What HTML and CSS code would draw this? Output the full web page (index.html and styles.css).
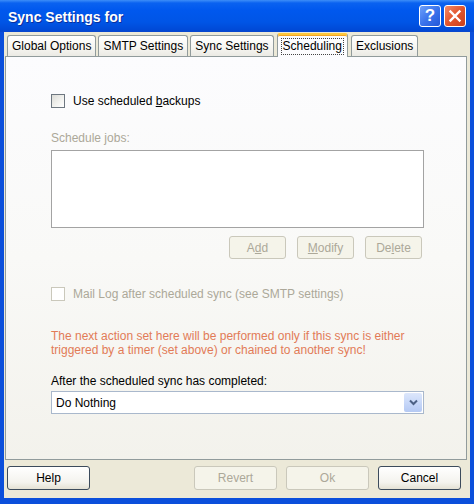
FILE: index.html
```html
<!DOCTYPE html>
<html>
<head>
<meta charset="utf-8">
<link rel="stylesheet" href="styles.css">
</head>
<body>
<div class="window">
  <div class="titlebar">
    <span class="title">Sync Settings for</span>
    <div class="tb-btns">
      <span class="tb tb-help">?</span>
      <span class="tb tb-close"><svg width="14" height="14" viewBox="0 0 14 14"><path d="M2.5 2.5 L11.5 11.5 M11.5 2.5 L2.5 11.5" stroke="#fff" stroke-width="2.4" stroke-linecap="square"/></svg></span>
    </div>
  </div>
  <div class="frame">
    <div class="client">
      <div class="tabs">
        <div class="tab">Global Options</div>
        <div class="tab">SMTP Settings</div>
        <div class="tab">Sync Settings</div>
        <div class="tab tab-active"><span class="focus">Scheduling</span></div>
        <div class="tab">Exclusions</div>
      </div>
      <div class="panel">
        <label class="check-row">
          <span class="checkbox"></span>
          <span>Use scheduled <u>b</u>ackups</span>
        </label>
        <div class="label-disabled">Schedule jobs:</div>
        <div class="listbox"></div>
        <div class="list-actions">
          <span class="btn btn-disabled">A<u>d</u>d</span>
          <span class="btn btn-disabled"><u>M</u>odify</span>
          <span class="btn btn-disabled">De<u>l</u>ete</span>
        </div>
        <label class="check-row check-disabled">
          <span class="checkbox"></span>
          <span>Mail Log after scheduled sync (see SMTP settings)</span>
        </label>
        <p class="note">The next action set here will be performed only if this sync is either triggered by a timer (set above) or chained to another sync!</p>
        <div class="label">After the scheduled sync has completed:</div>
        <div class="combo">
          <span class="combo-text">Do Nothing</span>
          <span class="combo-btn"><svg width="9" height="7" viewBox="0 0 9 7"><path d="M1 1.5 L4.5 5 L8 1.5" stroke="#4d6185" stroke-width="2" fill="none"/></svg></span>
        </div>
      </div>
      <div class="footer">
        <span class="btn btn-wide">Help</span>
        <div class="footer-right">
          <span class="btn btn-wide btn-disabled">Revert</span>
          <span class="btn btn-wide btn-disabled">Ok</span>
          <span class="btn btn-wide">Cancel</span>
        </div>
      </div>
    </div>
  </div>
</div>
</body>
</html>
```

FILE: styles.css
```css
* { box-sizing: border-box; }
html, body { margin: 0; padding: 0; }
body {
  width: 474px;
  height: 504px;
  overflow: hidden;
  font-family: "Liberation Sans", Arial, sans-serif;
  font-size: 12px;
  color: #000;
  background: #0b4ed8;
}
.window {
  width: 474px;
  height: 504px;
  display: flex;
  flex-direction: column;
}
.titlebar {
  height: 32px;
  flex: none;
  display: flex;
  align-items: center;
  justify-content: space-between;
  padding: 0 8px 0 8px;
  background: linear-gradient(to bottom, #3d8ef8 0px, #0a62f0 3px, #0058ee 10px, #0055e6 22px, #0049d6 30px, #0b46cc 32px);
}
.title {
  color: #fff;
  font-weight: bold;
  font-size: 14px;
  text-shadow: 1px 1px 0 #0a2f9c;
  padding-top: 2px;
}
.tb-btns {
  display: flex;
  gap: 3px;
}
.tb {
  width: 22px;
  height: 22px;
  border: 1px solid #fff;
  border-radius: 3px;
  display: flex;
  align-items: center;
  justify-content: center;
  color: #fff;
  font-weight: bold;
  font-size: 17px;
}
.tb-help {
  background: linear-gradient(135deg, #6c9ffa 0%, #3b74ec 50%, #2357d8 100%);
}
.tb-close {
  background: linear-gradient(135deg, #f08a6a 0%, #e2552d 50%, #c8401e 100%);
}
.frame {
  flex: 1;
  display: flex;
  padding: 0 4px 6px 4px;
  background: #0b4fdb;
}
.client {
  flex: 1;
  display: flex;
  flex-direction: column;
  background: #ece9d8;
  padding: 1px 3px 0 1px;
}
.tabs {
  display: flex;
  align-items: flex-end;
  gap: 2px;
  height: 24px;
  padding-left: 2px;
  margin-bottom: -1px;
  position: relative;
  z-index: 1;
}
.tab {
  height: 21px;
  margin-bottom: 1px;
  padding: 0 4px;
  display: flex;
  align-items: center;
  border: 1px solid #919b9c;
  border-bottom: none;
  border-radius: 3px 3px 0 0;
  background: linear-gradient(to bottom, #ffffff 0%, #f6f5f0 60%, #ebeae4 100%);
  white-space: nowrap;
}
.tab-active {
  height: 24px;
  margin-bottom: 0;
  margin-left: 1px;
  margin-right: 1px;
  padding: 0 3px;
  background: #fcfcfe;
  border-top: 2px solid #ffc83c;
  box-shadow: inset 0 1px 0 #f5a623;
}
.focus {
  border: 1px dotted #444;
  padding: 0 1px;
  line-height: 15px;
}
.panel {
  height: 404px;
  flex: none;
  border: 1px solid #919b9c;
  background: linear-gradient(to bottom, #fcfcfe 0%, #f9f9f7 50%, #f3f2ec 100%);
  padding: 36px 0 0 45px;
  display: flex;
  flex-direction: column;
  align-items: flex-start;
}
.check-row {
  display: flex;
  align-items: center;
  gap: 8px;
  height: 16px;
}
.checkbox {
  width: 14px;
  height: 14px;
  border: 1px solid #6e7780;
  background: linear-gradient(135deg, #dcdcd7 0%, #f3f3f0 60%, #ffffff 100%);
}
.check-disabled { color: #aca899; margin-top: 27px; }
.check-disabled .checkbox {
  border-color: #cac8bb;
  background: #fff;
}
.label-disabled {
  color: #aca899;
  margin-top: 22px;
  line-height: 14px;
}
.listbox {
  width: 373px;
  height: 78px;
  margin-top: 5px;
  border: 1px solid #a3a3a3;
  background: #fff;
}
.list-actions {
  width: 373px;
  display: flex;
  justify-content: flex-end;
  gap: 11px;
  margin-top: 8px;
  padding-right: 2px;
}
.btn {
  width: 57px;
  height: 23px;
  display: flex;
  align-items: center;
  justify-content: center;
  border: 1px solid #3c4b5c;
  border-radius: 3px;
  background: linear-gradient(to bottom, #ffffff 0%, #f4f3ee 70%, #e4e1d4 100%);
}
.btn-disabled {
  color: #aca899;
  border-color: #cac8bb;
  background: #f5f4ea;
}
.note {
  margin: 27px 0 0 0;
  width: 373px;
  color: #e27b57;
  line-height: 14px;
}
.label {
  margin-top: 17px;
  line-height: 14px;
}
.combo {
  width: 373px;
  height: 23px;
  margin-top: 3px;
  border: 1px solid #a9b8cc;
  background: #fff;
  display: flex;
  align-items: center;
  justify-content: space-between;
  padding: 1px 1px 1px 4px;
}
.combo-btn {
  width: 18px;
  height: 19px;
  display: flex;
  align-items: center;
  justify-content: center;
  background: linear-gradient(to bottom, #dde7fb 0%, #c4d5f8 60%, #b5c9f3 100%);
  border-radius: 2px;
}
.footer {
  display: flex;
  justify-content: space-between;
  margin-top: 6px;
  padding: 0 6px 0 2px;
}
.footer-right {
  display: flex;
  gap: 9px;
}
.btn-wide {
  width: 83px;
  height: 24px;
}
```
